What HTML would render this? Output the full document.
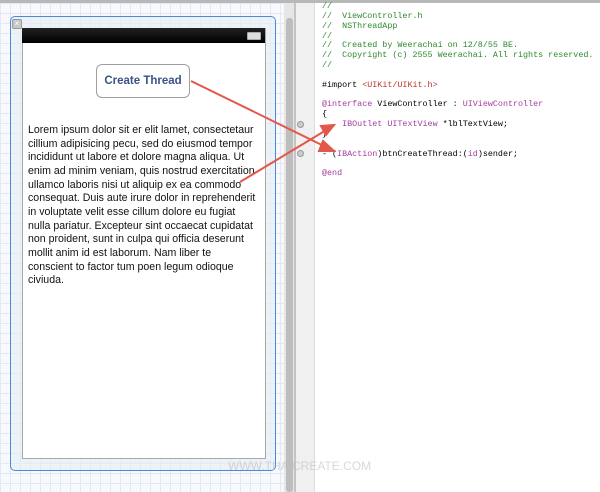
<!DOCTYPE html>
<html><head><style>
body{margin:0;width:600px;height:492px;overflow:hidden;position:relative;background:#fff;font-family:"Liberation Sans",sans-serif}
.grid{position:absolute;left:0;top:3px;width:284px;height:489px;background-color:#f7f9fd;
background-image:linear-gradient(#e1e9f5 1px,transparent 1px),linear-gradient(90deg,#e1e9f5 1px,transparent 1px);background-size:10px 10px}
.top{position:absolute;left:0;top:0;width:600px;height:3px;background:#b8b8b8}
.frame{position:absolute;left:10px;top:16px;width:264px;height:453px;border:1.5px solid #4a8ad8;border-radius:5px;background:rgba(230,236,244,.6)}
.close{position:absolute;left:12px;top:19px;width:8px;height:8px;background:#c8c8c8;border:1px solid #999;border-radius:2px;font-size:8px;line-height:8px;text-align:center;color:#fff}
.phone{position:absolute;left:22px;top:28px;width:242px;height:430px;background:#fff;border:1px solid #a8a8a8;border-top:none}
.bar{position:absolute;left:22px;top:28px;width:243px;height:15px;background:linear-gradient(#222,#000)}
.batt{position:absolute;left:247px;top:32px;width:12px;height:6px;border:1px solid #aaa;background:#ddd;border-radius:1px}
.btn{position:absolute;left:96px;top:64px;width:92px;height:32px;border:1px solid #a0a0a0;border-radius:6px;background:#fff;color:#3b5285;font-weight:bold;font-size:11.5px;text-align:center;line-height:32px}
.lorem{position:absolute;left:28px;top:124px;font-size:10.6px;line-height:13.65px;color:#111;white-space:nowrap}
.sb{position:absolute;left:286px;top:18px;width:7px;height:474px;background:#bdbdbd;border-radius:3px}
.sbt{position:absolute;left:284px;top:3px;width:10px;height:489px;background:#e6e6e6}
.div1{position:absolute;left:294px;top:3px;width:2px;height:489px;background:#c4c4c4}
.gut{position:absolute;left:296px;top:3px;width:18px;height:489px;background:#f0f0f0;border-right:1px solid #ddd}
.code{position:absolute;left:322px;top:2px;font-family:"Liberation Mono",monospace;font-size:8.4px;line-height:9.85px;white-space:pre;color:#000}
.g{color:#2d8a2d}.p{color:#a33ca0}.r{color:#c4332a}
.dot{position:absolute;width:5px;height:5px;border-radius:50%;background:#ccc;border:1px solid #999}
.wm{position:absolute;left:228px;top:459px;font-size:12px;color:rgba(190,190,190,.6)}
</style></head><body>
<div class="grid"></div>
<div class="top"></div>
<div class="frame"></div>
<div class="close">×</div>
<div class="phone"></div>
<div class="bar"></div>
<div class="batt"></div>
<div class="btn">Create Thread</div>
<div class="lorem">Lorem ipsum dolor sit er elit lamet, consectetaur<br>cillium adipisicing pecu, sed do eiusmod tempor<br>incididunt ut labore et dolore magna aliqua. Ut<br>enim ad minim veniam, quis nostrud exercitation<br>ullamco laboris nisi ut aliquip ex ea commodo<br>consequat. Duis aute irure dolor in reprehenderit<br>in voluptate velit esse cillum dolore eu fugiat<br>nulla pariatur. Excepteur sint occaecat cupidatat<br>non proident, sunt in culpa qui officia deserunt<br>mollit anim id est laborum. Nam liber te<br>conscient to factor tum poen legum odioque<br>civiuda.</div>
<div class="sbt"></div>
<div class="sb"></div>
<div class="div1"></div>
<div class="gut"></div>
<div class="dot" style="left:297px;top:121px"></div>
<div class="dot" style="left:297px;top:150px"></div>
<div class="code"><span class="g">//
//  ViewController.h
//  NSThreadApp
//
//  Created by Weerachai on 12/8/55 BE.
//  Copyright (c) 2555 Weerachai. All rights reserved.
//</span>

#import <span class="r">&lt;UIKit/UIKit.h&gt;</span>

<span class="p">@interface</span> ViewController : <span class="p">UIViewController</span>
{
    <span class="p">IBOutlet UITextView</span> *lblTextView;
}

- (<span class="p">IBAction</span>)btnCreateThread:(<span class="p">id</span>)sender;

<span class="p">@end</span></div>
<svg style="position:absolute;left:0;top:0" width="600" height="492">
<g stroke="#e2584a" stroke-width="2" fill="#e2584a">
<line x1="191" y1="81" x2="328" y2="148"/>
<polygon points="334,151 323,141 319,151"/>
<line x1="240" y1="182" x2="328" y2="129"/>
<polygon points="334,125 321,126 326,135"/>
</g></svg>
<div class="wm">WWW.THAICREATE.COM</div>
</body></html>
